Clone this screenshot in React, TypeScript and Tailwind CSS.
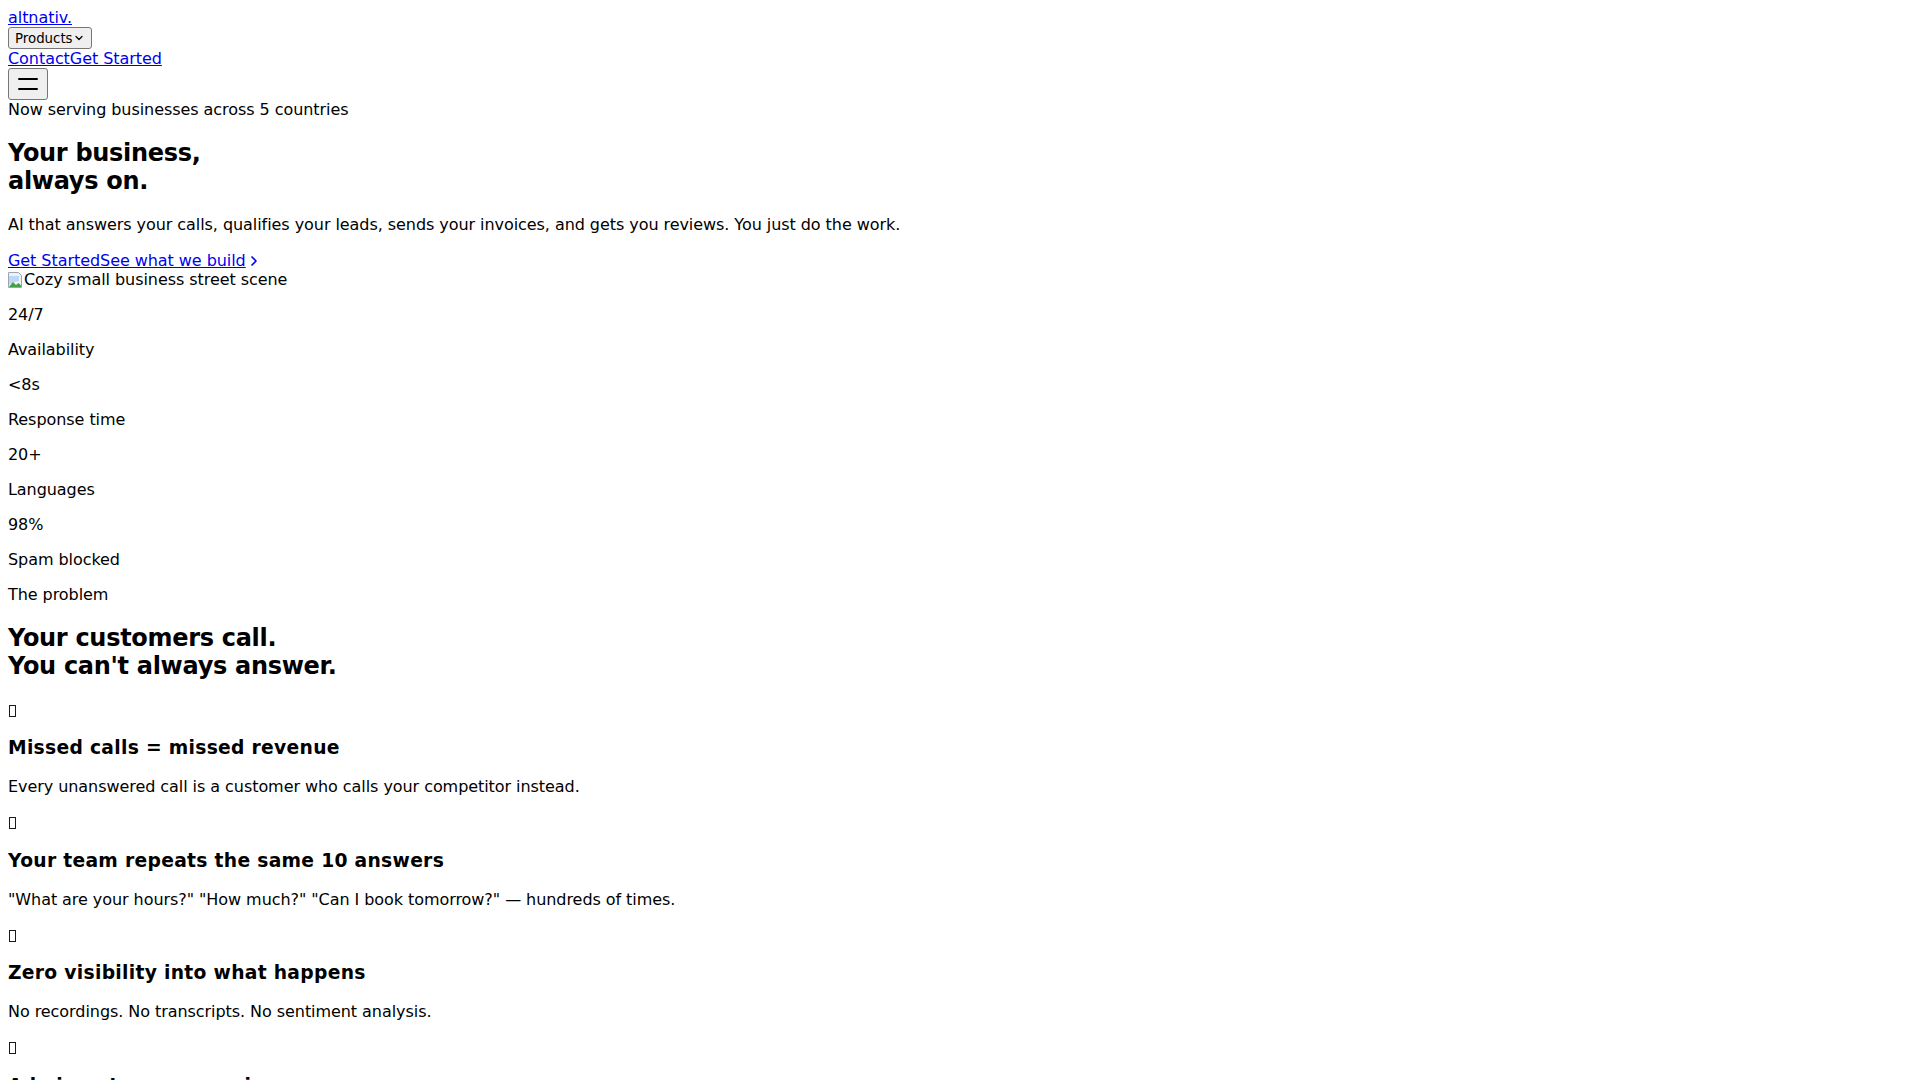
import { ChevronDown, ChevronRight } from 'lucide-react';

const stats = [
  { value: '24/7', label: 'Availability' },
  { value: '<8s', label: 'Response time' },
  { value: '20+', label: 'Languages' },
  { value: '98%', label: 'Spam blocked' },
];

const problems = [
  { title: 'Missed calls = missed revenue', body: 'Every unanswered call is a customer who calls your competitor instead.' },
  { title: 'Your team repeats the same 10 answers', body: '"What are your hours?" "How much?" "Can I book tomorrow?" — hundreds of times.' },
  { title: 'Zero visibility into what happens', body: 'No recordings. No transcripts. No sentiment analysis.' },
  { title: 'Admin eats your evenings', body: 'Invoices, follow-ups and review requests pile up after closing time.' },
];

function BrokenImage() {
  // the little "image failed to load" glyph
  return (
    <svg width="16" height="16" viewBox="0 0 16 16" className="inline-block align-[-3px]">
      <path d="M0.5 0.5h10l3 3v12h-13z" fill="#eef2f6" stroke="#9aa6b4" />
      <path d="M1 4h10v5L6 10 1 13z" fill="#bcd8f2" />
      <path d="M1 15l4-5 3 3 2.5-2 2.5 2.5V15z" fill="#43a047" />
    </svg>
  );
}

// missing-glyph box shown where the emoji icon failed
function Tofu() {
  return <span className="inline-block w-[7px] h-[12px] ml-[1px] border border-[#1a1a1a] align-[-2px]" />;
}

export default function App() {
  return (
    <div className="p-2 font-['DejaVu_Sans',sans-serif] text-[16px] leading-[normal] tracking-[-0.06px] text-black">
      {/* Nav */}
      <nav>
        <div>
          <a href="#" className="text-[#0000EE] underline">altnativ.</a>
        </div>
        <div>
          <button className="inline-flex items-center h-[22px] bg-[#efefef] border border-[#767676] rounded-[3px] px-[6px] text-[13.33px] leading-[normal] tracking-normal text-black">
            Products<ChevronDown className="w-3 h-3" strokeWidth={2.5} />
          </button>
        </div>
        <div>
          <a href="#" className="text-[#0000EE] underline">Contact</a>
          <a href="#" className="text-[#0000EE] underline">Get Started</a>
        </div>
        <button className="flex items-center justify-center w-[40px] h-[32px] bg-[#efefef] border border-[#767676] rounded-[3px]">
          <svg width="24" height="24" viewBox="0 0 24 24" fill="none" stroke="currentColor" strokeWidth="2" strokeLinecap="round">
            <line x1="3" y1="7" x2="21" y2="7" />
            <line x1="3" y1="17" x2="21" y2="17" />
          </svg>
        </button>
      </nav>

      {/* Hero */}
      <section>
        <div>Now serving businesses across 5 countries</div>
        <h1 className="text-[24px] font-bold tracking-[-0.3px] my-[19.92px]">
          Your business,<br />always on.
        </h1>
        <p className="my-4">
          AI that answers your calls, qualifies your leads, sends your invoices, and gets you reviews. You just do the work.
        </p>
        <div className="h-[20px] pt-[1px]">
          <a href="#" className="text-[#0000EE] underline">Get Started</a>
          <a href="#" className="text-[#0000EE]">
            <span className="underline">See what we build</span>
            <ChevronRight className="inline-block w-4 h-4" strokeWidth={2.5} />
          </a>
        </div>
        <div className="h-[19px]">
          <BrokenImage />Cozy small business street scene
        </div>
        {stats.map(s => (
          <div key={s.label}>
            <p className="my-4">{s.value}</p>
            <p className="my-4">{s.label}</p>
          </div>
        ))}
      </section>

      {/* Problem */}
      <section>
        <p className="my-4">The problem</p>
        <h2 className="text-[24px] font-bold tracking-[-0.3px] my-[19.92px]">
          Your customers call.<br />You can't always answer.
        </h2>
        {problems.map(p => (
          <div key={p.title}>
            <div className="my-4"><Tofu /></div>
            <h3 className="text-[18.72px] font-bold tracking-[0.3px] my-[18.72px]">{p.title}</h3>
            <p className="my-4">{p.body}</p>
          </div>
        ))}
      </section>
    </div>
  );
}
